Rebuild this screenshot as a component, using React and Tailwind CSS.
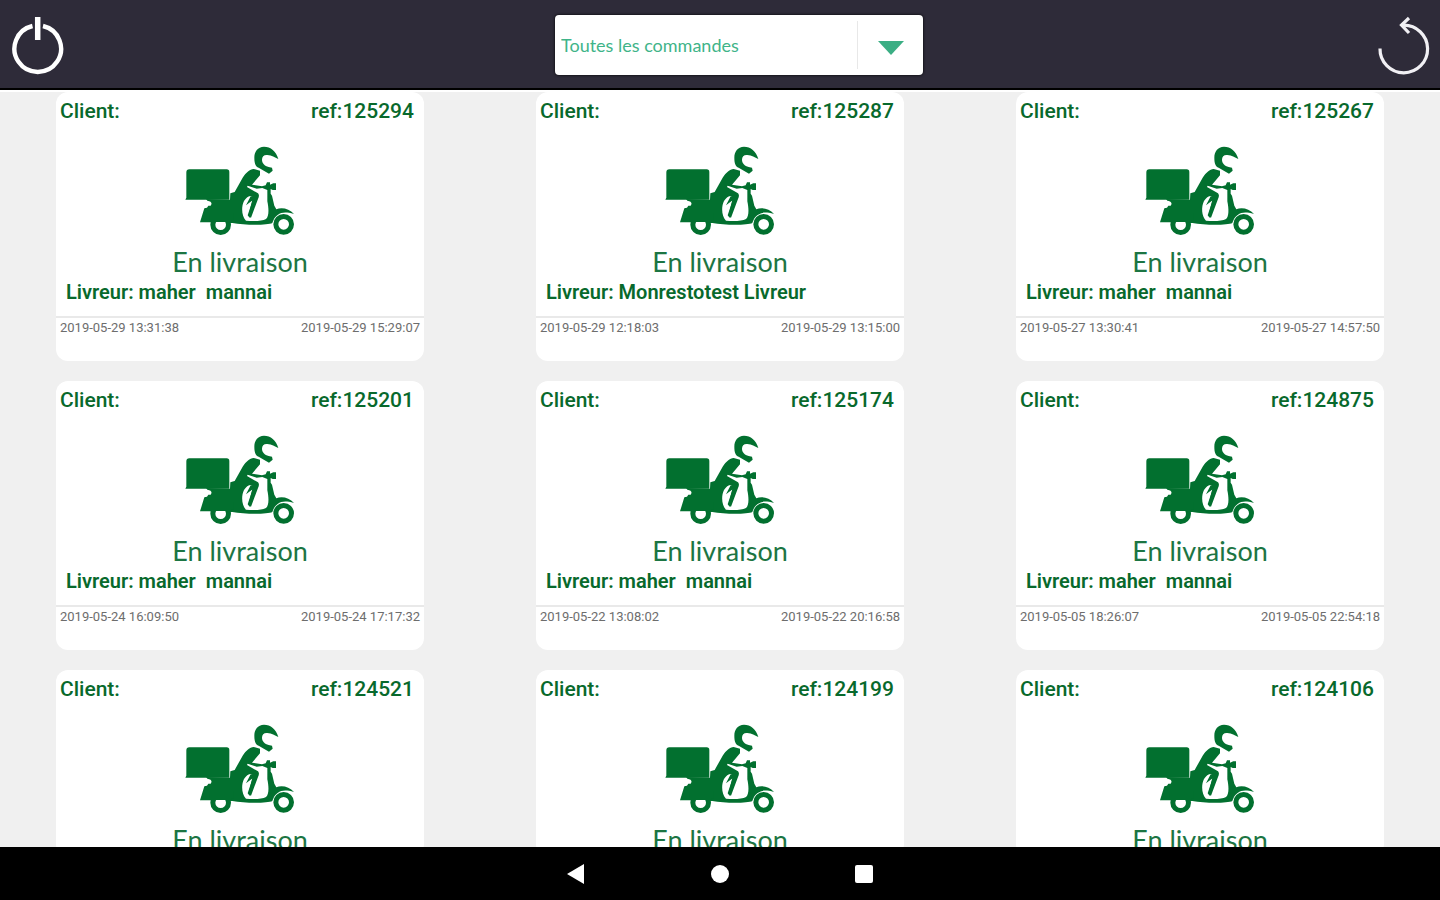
const orders = [
  { ref: "125294", courier: "maher  mannai", start: "2019-05-29 13:31:38", end: "2019-05-29 15:29:07" },
  { ref: "125287", courier: "Monrestotest Livreur", start: "2019-05-29 12:18:03", end: "2019-05-29 13:15:00" },
  { ref: "125267", courier: "maher  mannai", start: "2019-05-27 13:30:41", end: "2019-05-27 14:57:50" },
  { ref: "125201", courier: "maher  mannai", start: "2019-05-24 16:09:50", end: "2019-05-24 17:17:32" },
  { ref: "125174", courier: "maher  mannai", start: "2019-05-22 13:08:02", end: "2019-05-22 20:16:58" },
  { ref: "124875", courier: "maher  mannai", start: "2019-05-05 18:26:07", end: "2019-05-05 22:54:18" },
  { ref: "124521" },
  { ref: "124199" },
  { ref: "124106" },
];

function PowerIcon() {
  return (
    <svg viewBox="0 0 52 60" className="h-[60px] w-[52px]" fill="none" stroke="#fff" aria-hidden="true">
      <path d="M20.5 11A23.3 23.3 0 1 0 31 11" strokeWidth="4.4" />
      <path d="M25.7 2V25" strokeWidth="5.5" />
    </svg>
  );
}

function ReloadIcon() {
  return (
    <svg viewBox="0 0 52 60" className="h-[60px] w-[52px]" fill="none" stroke="#f1f0f4" aria-hidden="true">
      <path d="M2 33.5A23.8 23.8 0 1 0 25 10.2" strokeWidth="3.2" />
      <path d="M31 3L23.5 10L31 18" strokeWidth="3.2" />
    </svg>
  );
}

function ScooterIcon() {
  return (
    <svg viewBox="42 30 336 276" className="h-[92px] w-[112px]" fill="#02702f" aria-hidden="true">
      <path d="M58 103H170Q178 103 178 111V194H46L49 188V112Q49 103 58 103Z" />
      <path d="M325 72C318 48 302 35 282 35C263 35 253 50 253 68C253 84 256 94 266 98L297 116L308 107L306 98L296 96C284 92 276 85 276 74C276 64 282 59 292 60C306 61 314 67 325 72Z" />
      <path d="M251 102L270 107V121L246 149L276 154L287 151L291 142H300V149L310 145H318V165H308L302 162V176L306 182L313 212L319 223C335 216 358 221 372 237C348 231 336 231 323 240C312 248 310 257 307 264C293 271 224 271 187 264L126 262H90L103 220L111 218L115 212H122C127 205 125 199 112 197L108 192L180 194L181 175L194 171L218 128C229 112 239 103 251 102ZM233 152L231 156L264 175C268 179 267 186 264 192L243 248L235 243L247 195V184C239 181 229 187 222 198C213 216 215 244 228 257C248 259 276 259 288 252C297 246 297 222 292 199V165L277 159L260 161Z" fillRule="evenodd" />
      <path d="M228 211L242 184L266 181L240 249L233 241L248 196Z" />
      <circle cx="152" cy="269" r="23.5" fill="#fff" stroke="#02702f" strokeWidth="15" />
      <path d="M118 234H190V256L180 261H120Z" />
      <circle cx="341" cy="268" r="23.5" fill="#fff" stroke="#02702f" strokeWidth="15" />
    </svg>
  );
}

function OrderCard({ order }) {
  return (
    <article className="mx-14 rounded-xl bg-white text-[#08692c]">
      <div className="flex justify-between pt-[7px] pr-2.5 pl-1 text-[21px] leading-6 font-medium">
        <h2>Client:</h2>
        <p>ref:{order.ref}</p>
      </div>
      <div className="flex flex-col items-center pt-[22px]">
        <ScooterIcon />
        <p className="pt-[9px] font-['Lato',sans-serif] text-[27px] leading-8 text-[#1c7543]">En livraison</p>
      </div>
      {order.courier && (
        <>
          <p className="px-2.5 pb-2.5 text-xl leading-7 font-semibold whitespace-pre">Livreur: {order.courier}</p>
          <div className="flex justify-between border-t-2 border-[#e9e9e9] px-1 pb-6 text-[13px] leading-[19px] text-[#6d6d6d]">
            <time>{order.start}</time>
            <time>{order.end}</time>
          </div>
        </>
      )}
    </article>
  );
}

export default function App() {
  return (
    <div className="flex h-screen flex-col bg-[#f0f0f0] font-['Roboto',sans-serif]">
      <header className="grid shrink-0 grid-cols-[1fr_auto_1fr] items-center border-b-2 border-black bg-[#2e2b39] pt-[15px] pr-2.5 pb-[13px] pl-3">
        <button type="button" aria-label="Quitter" className="justify-self-start">
          <PowerIcon />
        </button>
        <div className="ml-9 grid w-[368px] items-center rounded bg-white shadow-[0_0_3px_#000]">
          <select
            aria-label="Filtrer les commandes"
            className="col-start-1 row-start-1 h-[60px] w-full appearance-none rounded bg-transparent px-1.5 font-['Lato',sans-serif] text-lg text-[#3fb489]"
          >
            <option>Toutes les commandes</option>
          </select>
          <span className="pointer-events-none col-start-1 row-start-1 flex h-12 w-[66px] items-center justify-center justify-self-end border-l border-[#e8e8e8]">
            <svg viewBox="0 0 26 14" className="mt-1.5 h-3.5 w-[26px]" fill="#3bae84" aria-hidden="true">
              <path d="M0 0H26L13 14Z" />
            </svg>
          </span>
        </div>
        <button type="button" aria-label="Actualiser" className="justify-self-end">
          <ReloadIcon />
        </button>
      </header>
      <main className="min-h-0 flex-1 overflow-hidden border-t-2 border-white">
        <div className="grid grid-cols-3 gap-y-5">
          {orders.map((order) => (
            <OrderCard key={order.ref} order={order} />
          ))}
        </div>
      </main>
      <nav className="flex h-[53px] shrink-0 items-center justify-center gap-[120px] bg-black">
        <button type="button" aria-label="Retour">
          <svg viewBox="0 0 24 24" className="size-6" fill="#fff" aria-hidden="true"><path d="M3 12L20 2V22Z" /></svg>
        </button>
        <button type="button" aria-label="Accueil">
          <svg viewBox="0 0 24 24" className="size-6" fill="#fff" aria-hidden="true"><circle cx="12" cy="12" r="9" /></svg>
        </button>
        <button type="button" aria-label="Applications récentes">
          <svg viewBox="0 0 24 24" className="size-6" fill="#fff" aria-hidden="true"><rect x="3" y="3" width="18" height="18" rx="2" /></svg>
        </button>
      </nav>
    </div>
  );
}
